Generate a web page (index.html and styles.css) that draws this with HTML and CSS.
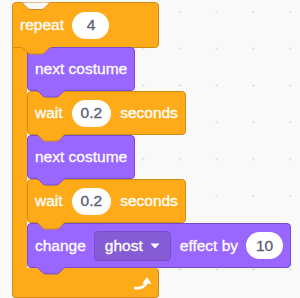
FILE: index.html
```html
<!DOCTYPE html>
<html lang="en">
<head>
    <title>Repeat Script</title>
    <link rel="stylesheet" href="styles.css">
</head>
<body>
    <div class="c-block">
        <div class="c-top">
            <svg class="notch" viewBox="0 0 32 8"><path d="M0 0.5 C2 0.5 3 1.5 4 2.5 L7 5.5 C8 6.5 9 7.5 11 7.5 H21 C23 7.5 24 6.5 25 5.5 L28 2.5 C29 1.5 30 0.5 32 0.5 Z" fill="#f9f9f9"/><path d="M0 0.5 C2 0.5 3 1.5 4 2.5 L7 5.5 C8 6.5 9 7.5 11 7.5 H21 C23 7.5 24 6.5 25 5.5 L28 2.5 C29 1.5 30 0.5 32 0.5" fill="none" stroke="#cf8b17"/></svg>
            <span class="label">repeat</span>
            <span class="oval">4</span>
            <svg class="tab" viewBox="0 0 32 8"><path d="M0 0 H32 C30 0.5 29 1 28 2 L25 5 C24 6 23 7 21 7 H11 C9 7 8 6 7 5 L4 2 C3 1 2 0.5 0 0 Z" fill="#ffab19"/><path d="M0 0 C2 0.5 3 1 4 2 L7 5 C8 6 9 7 11 7 H21 C23 7 24 6 25 5 L28 2 C29 1 30 0.5 32 0" fill="none" stroke="#cf8b17"/></svg>
        </div>
        <div class="c-mouth">
            <div class="c-arm"></div>
            <div class="stack">
                <div class="block looks">
                    <span class="label">next costume</span>
                    <svg class="tab" viewBox="0 0 32 8"><path d="M0 0 H32 C30 0.5 29 1 28 2 L25 5 C24 6 23 7 21 7 H11 C9 7 8 6 7 5 L4 2 C3 1 2 0.5 0 0 Z" fill="#9966ff"/><path d="M0 0 C2 0.5 3 1 4 2 L7 5 C8 6 9 7 11 7 H21 C23 7 24 6 25 5 L28 2 C29 1 30 0.5 32 0" fill="none" stroke="#774dcb"/></svg>
                </div>
                <div class="block control">
                    <span class="label">wait</span>
                    <span class="oval">0.2</span>
                    <span class="label">seconds</span>
                    <svg class="tab" viewBox="0 0 32 8"><path d="M0 0 H32 C30 0.5 29 1 28 2 L25 5 C24 6 23 7 21 7 H11 C9 7 8 6 7 5 L4 2 C3 1 2 0.5 0 0 Z" fill="#ffab19"/><path d="M0 0 C2 0.5 3 1 4 2 L7 5 C8 6 9 7 11 7 H21 C23 7 24 6 25 5 L28 2 C29 1 30 0.5 32 0" fill="none" stroke="#cf8b17"/></svg>
                </div>
                <div class="block looks">
                    <span class="label">next costume</span>
                    <svg class="tab" viewBox="0 0 32 8"><path d="M0 0 H32 C30 0.5 29 1 28 2 L25 5 C24 6 23 7 21 7 H11 C9 7 8 6 7 5 L4 2 C3 1 2 0.5 0 0 Z" fill="#9966ff"/><path d="M0 0 C2 0.5 3 1 4 2 L7 5 C8 6 9 7 11 7 H21 C23 7 24 6 25 5 L28 2 C29 1 30 0.5 32 0" fill="none" stroke="#774dcb"/></svg>
                </div>
                <div class="block control">
                    <span class="label">wait</span>
                    <span class="oval">0.2</span>
                    <span class="label">seconds</span>
                    <svg class="tab" viewBox="0 0 32 8"><path d="M0 0 H32 C30 0.5 29 1 28 2 L25 5 C24 6 23 7 21 7 H11 C9 7 8 6 7 5 L4 2 C3 1 2 0.5 0 0 Z" fill="#ffab19"/><path d="M0 0 C2 0.5 3 1 4 2 L7 5 C8 6 9 7 11 7 H21 C23 7 24 6 25 5 L28 2 C29 1 30 0.5 32 0" fill="none" stroke="#cf8b17"/></svg>
                </div>
                <div class="block looks tall">
                    <span class="label">change</span>
                    <span class="dropdown">ghost <svg class="caret" viewBox="0 0 10 6"><path d="M0.5 0.5 H9.5 L5 5.5 Z" fill="#fff"/></svg></span>
                    <span class="label">effect by</span>
                    <span class="oval">10</span>
                    <svg class="tab" viewBox="0 0 32 8"><path d="M0 0 H32 C30 0.5 29 1 28 2 L25 5 C24 6 23 7 21 7 H11 C9 7 8 6 7 5 L4 2 C3 1 2 0.5 0 0 Z" fill="#9966ff"/><path d="M0 0 C2 0.5 3 1 4 2 L7 5 C8 6 9 7 11 7 H21 C23 7 24 6 25 5 L28 2 C29 1 30 0.5 32 0" fill="none" stroke="#774dcb"/></svg>
                </div>
            </div>
        </div>
        <div class="c-bottom">
            <svg class="loop-arrow" viewBox="0 0 18 14"><path d="M1.5 12 C6 12.8 11 11 12.4 6.5" fill="none" stroke="#fff" stroke-width="2.8" stroke-linecap="round"/><path d="M8.2 7.6 L13 1 L17.4 7.8 Z" fill="#fff"/></svg>
        </div>
    </div>
</body>
</html>
```

FILE: styles.css
```css
body {
    margin: 0;
    padding: 2px 0 0 12px;
    height: 298px;
    box-sizing: border-box;
    overflow: hidden;
    background-color: #f9f9f9;
    background-image: radial-gradient(circle, #d6d6d6 0.8px, transparent 1.3px);
    background-size: 36.75px 36.75px;
    background-position: 14.6px -6.4px;
    font-family: "Liberation Sans", Arial, sans-serif;
    font-size: 15.5px;
    color: #fff;
}
.label, .dropdown {
    -webkit-text-stroke: 0.3px #fff;
}
.c-block {
    width: 147px;
}
.c-top {
    position: relative;
    box-sizing: border-box;
    height: 46px;
    width: 147px;
    display: flex;
    align-items: center;
    gap: 8.5px;
    padding-left: 7px;
    background: #ffab19;
    border: 1px solid #cf8b17;
    border-radius: 4px;
    border-bottom-left-radius: 0;
}
.c-mouth {
    display: flex;
    margin-top: -1px;
}
.c-arm {
    width: 15px;
    flex: none;
    box-sizing: border-box;
    background: #ffab19;
    border-left: 1px solid #cf8b17;
}
.stack {
    display: flex;
    flex-direction: column;
    align-items: flex-start;
}
.block {
    position: relative;
    box-sizing: border-box;
    height: 44px;
    display: flex;
    align-items: center;
    gap: 9px;
    padding: 0 7px;
    border: 1px solid;
    border-radius: 4px;
    white-space: nowrap;
}
.block.tall {
    height: 45px;
    gap: 8px;
}
.looks {
    background: #9966ff;
    border-color: #774dcb;
}
.control {
    background: #ffab19;
    border-color: #cf8b17;
}
.tab {
    position: absolute;
    left: 7px;
    top: 100%;
    width: 32px;
    height: 8px;
    z-index: 2;
}
.notch {
    position: absolute;
    left: 7px;
    top: -1px;
    width: 32px;
    height: 8px;
}
.oval {
    box-sizing: border-box;
    min-width: 37px;
    height: 27px;
    padding: 0 9px;
    display: flex;
    align-items: center;
    justify-content: center;
    background: #fff;
    border-radius: 14px;
    color: #575e75;
    -webkit-text-stroke: 0.3px #575e75;
}
.dropdown {
    box-sizing: border-box;
    height: 30px;
    display: flex;
    align-items: center;
    gap: 7px;
    padding: 0 10px 0 10px;
    margin-right: 1px;
    background: #855cd6;
    border: 1px solid #774dcb;
    border-radius: 4px;
}
.caret {
    width: 10px;
    height: 6px;
}
.c-bottom {
    box-sizing: border-box;
    height: 30px;
    width: 147px;
    display: flex;
    align-items: center;
    justify-content: flex-end;
    padding-right: 6px;
    background: #ffab19;
    border: 1px solid #cf8b17;
    border-top: none;
    border-radius: 0 4px 4px 4px;
}
.loop-arrow {
    width: 18px;
    height: 14px;
}
```
